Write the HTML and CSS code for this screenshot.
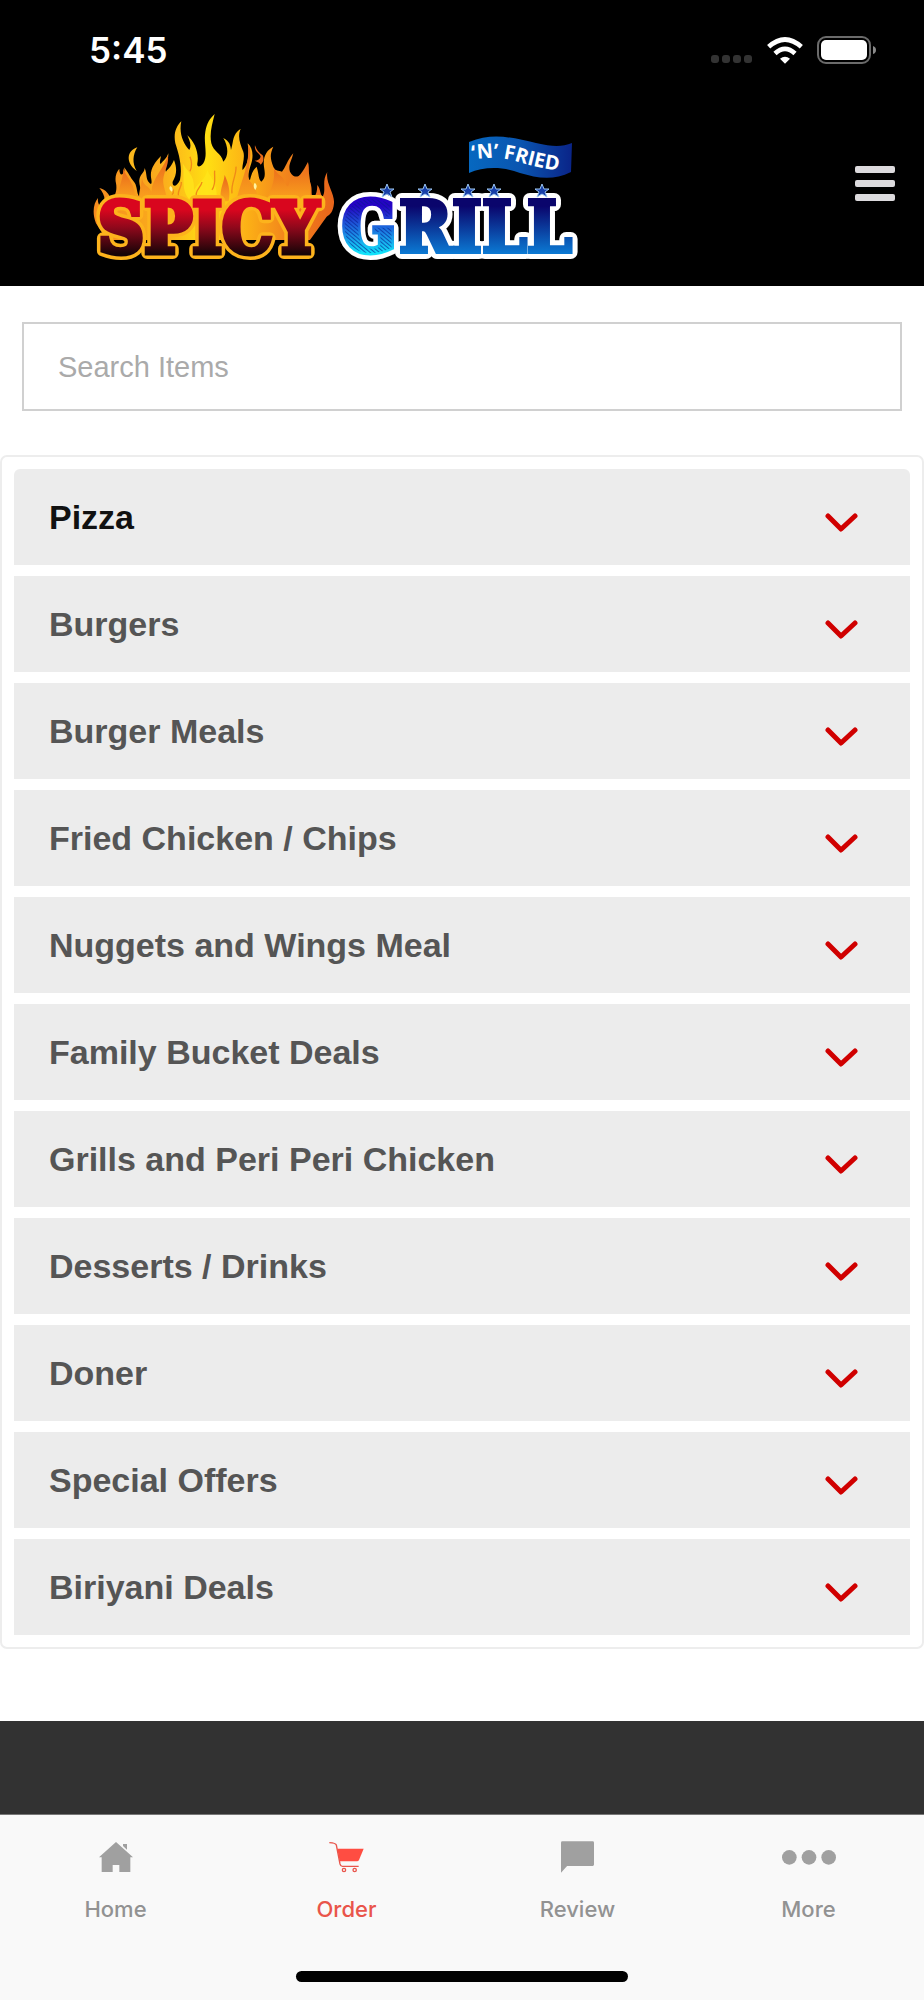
FILE: index.html
```html
<!DOCTYPE html>
<html lang="en">
<head>
    <meta charset="UTF-8">
    <meta name="viewport" content="width=device-width, initial-scale=1.0">
    <title>Spicy Grill 'N' Fried</title>
    <link rel="stylesheet" href="styles.css">
</head>
<body>

    <header class="header">
        <div class="status-bar">
            <span class="time">5:45</span>
            <div class="status-icons">
                <svg class="signal" viewBox="0 0 42 8" width="42" height="8">
                    <rect x="0" width="8" height="8" rx="3"/>
                    <rect x="11" width="8" height="8" rx="3"/>
                    <rect x="22" width="8" height="8" rx="3"/>
                    <rect x="33" width="8" height="8" rx="3"/>
                </svg>
                <svg viewBox="0 0 108 80" width="36" height="27">
                    <path d="M54 80 L39 65 Q54 52 69 65 Z" fill="#fff"/>
                    <path d="M24 49 Q54 21 84 49" fill="none" stroke="#fff" stroke-width="14"/>
                    <path d="M5 29 Q54 -15 103 29" fill="none" stroke="#fff" stroke-width="14"/>
                </svg>
                <svg viewBox="0 0 59 28" width="59" height="28">
                    <rect x="1" y="1" width="52" height="26" rx="8" fill="none" stroke="#6b6b6b" stroke-width="2"/>
                    <rect x="4" y="4" width="46" height="20" rx="5" fill="#fff"/>
                    <path d="M56 10 Q59 11 59 14 Q59 17 56 18 Z" fill="#8a8a8a"/>
                </svg>
            </div>
        </div>

        <div class="brand-bar">
            <a href="#" class="logo" aria-label="Spicy Grill 'N' Fried">
                <svg viewBox="90 110 500 168" width="500" height="168">
                    <defs>
                        <linearGradient id="fire" gradientUnits="userSpaceOnUse" x1="40" y1="0" x2="765" y2="0">
                            <stop offset="0" stop-color="#f58a1f"/>
                            <stop offset=".3" stop-color="#fbb11c"/>
                            <stop offset=".47" stop-color="#ffdf12"/>
                            <stop offset=".62" stop-color="#fdb515"/>
                            <stop offset=".8" stop-color="#f2841c"/>
                            <stop offset="1" stop-color="#e8641b"/>
                        </linearGradient>
                        <linearGradient id="ember" x1="0" y1="0" x2="0" y2="1">
                            <stop offset="0" stop-color="#e9661c"/>
                            <stop offset="1" stop-color="#fba51d"/>
                        </linearGradient>
                        <linearGradient id="red" gradientUnits="userSpaceOnUse" x1="0" y1="202" x2="0" y2="254">
                            <stop offset=".15" stop-color="#d9061e"/>
                            <stop offset=".5" stop-color="#8d081b"/>
                            <stop offset="1" stop-color="#170407"/>
                        </linearGradient>
                        <linearGradient id="blue" gradientUnits="userSpaceOnUse" x1="0" y1="201" x2="0" y2="253">
                            <stop offset=".1" stop-color="#0a056c"/>
                            <stop offset="1" stop-color="#0b78d2"/>
                        </linearGradient>
                        <linearGradient id="cyan" gradientUnits="userSpaceOnUse" x1="0" y1="201" x2="0" y2="253">
                            <stop offset=".1" stop-color="#2503c4"/>
                            <stop offset="1" stop-color="#12e3fa"/>
                        </linearGradient>
                        <linearGradient id="flag" x1="0" y1="0" x2="1" y2="0">
                            <stop offset="0" stop-color="#0668c0"/>
                            <stop offset=".5" stop-color="#0a55b0"/>
                            <stop offset="1" stop-color="#0a2488"/>
                        </linearGradient>
                        <pattern id="stripes" width="3" height="3" patternUnits="userSpaceOnUse" patternTransform="rotate(40)">
                            <rect width="3" height="1" fill="#061b8c" fill-opacity=".6"/>
                        </pattern>
                        <path id="star" d="M0 -7 L2 -2 L7 -2 L3 1 L5 6 L0 3 L-5 6 L-3 1 L-7 -2 L-2 -2 Z"/>
                        <path id="flag-line" d="M473 160 Q496 155 519 162 T574 173"/>
                    </defs>

                    <!-- flames -->
                    <g transform="translate(80 100) scale(.3333)">
                        <path fill="url(#fire)" d="M48 370 C36 340 40 310 54 294 C52 312 60 322 68 316 C80 302 72 280 58 264 C78 268 90 285 92 300 C106 290 112 270 108 250 C104 232 108 218 118 206 C118 222 124 226 128 222 C134 215 134 208 132 202 C146 218 150 232 164 248 C172 260 170 280 178 290 C190 275 176 258 178 240 C180 222 194 218 194 204 C202 222 196 236 208 248 C214 256 216 250 214 238 C208 210 222 190 243 168 C240 182 238 190 242 192 C250 182 260 176 265 160 C266 186 250 200 258 215 C262 208 270 206 282 180 C292 205 290 225 278 245 C276 262 290 262 300 240 C308 200 296 160 286 130 C280 100 288 80 304 64 C296 100 310 130 328 150 C336 135 328 120 322 106 C344 125 358 160 352 190 C350 200 358 205 370 190 C385 165 370 130 376 95 C380 70 390 55 404 42 C396 75 388 100 394 130 C400 155 424 160 430 185 C446 170 446 140 430 114 C448 124 452 135 453 150 C462 120 456 105 482 86 C472 110 480 130 490 155 C496 175 484 200 488 210 C506 190 508 165 503 130 C520 145 520 170 514 190 C506 215 500 235 510 240 C514 225 518 210 530 200 C538 225 534 235 544 245 C556 235 556 225 552 200 C548 170 560 150 580 140 C568 165 572 180 580 200 C586 215 596 210 606 215 C616 205 622 180 640 160 C634 185 624 195 630 215 C640 235 655 232 662 222 C672 210 676 200 684 186 C690 210 680 225 690 245 C700 270 690 280 700 295 C708 285 712 275 712 255 C722 265 720 285 728 290 C740 270 724 245 742 216 C736 250 765 280 762 310 C760 335 750 345 740 350 L690 420 H80 Z"/>
                        <path fill="#fbb81c" d="M172 142 C140 152 136 188 170 213 C156 190 158 164 172 142 Z"/>
                        <path fill="#e96b1c" d="M525 136 C522 156 540 160 542 170 C540 178 532 182 524 182 C534 186 540 188 542 194 C552 184 552 174 548 166 C536 158 530 150 525 136 Z"/>
                        <path fill="url(#ember)" d="M118 300 C110 265 130 245 130 205 C138 235 166 245 166 300 Z"/>
                        <path fill="url(#ember)" d="M180 304 C172 285 184 260 186 235 C190 260 206 256 214 275 C216 235 256 200 264 164 C268 200 246 220 250 250 C254 275 262 285 258 304 Z"/>
                        <path fill="url(#ember)" d="M424 304 C416 270 432 250 434 225 C446 250 452 275 446 304 Z"/>
                        <path fill="url(#ember)" d="M470 304 C474 260 512 200 504 132 C524 165 494 220 510 244 C526 262 536 280 530 304 Z"/>
                        <path fill="url(#ember)" d="M560 304 C570 270 586 250 582 205 C600 235 606 222 614 245 C630 280 622 240 640 228 C666 246 676 222 684 190 C688 240 696 260 690 304 Z"/>
                        <path fill="#ffe51a" d="M330 300 C300 270 316 230 308 190 C326 220 344 225 342 270 C352 250 376 240 382 210 C392 235 414 250 410 300 Z" opacity=".8"/>
                        <path fill="none" stroke="#f08a17" stroke-width="4" d="M296 290 C290 272 306 262 304 246 M350 290 C342 272 364 262 366 246 M396 270 C410 250 402 230 404 212 M456 280 C452 250 470 226 468 200 M330 214 C338 196 334 180 330 170 M270 268 C280 262 284 276 276 284"/>
                        <path fill="#fff3a0" d="M271 258 C278 262 280 268 276 275 C268 270 266 264 271 258 Z M524 248 C532 254 532 262 526 270 C520 262 520 256 524 248 Z"/>
                    </g>

                    <!-- wordmark: wide outline first, then the heavy letters on top -->
                    <g class="wordmark">
                        <g class="spicy-outline"><text id="spicy" x="98" y="253">SPICY</text></g>
                        <use href="#spicy" class="spicy"/>
                        <g class="grill-outline">
                            <text id="grill-g" x="342" y="252">G</text>
                            <text id="grill-rest" x="399" y="252">RILL</text>
                        </g>
                        <use href="#grill-g" class="g"/>
                        <use href="#grill-g" class="g-stripes"/>
                        <use href="#grill-rest" class="grill"/>
                    </g>

                    <g fill="#173fa8" stroke="#9cc6f2" stroke-width="1">
                        <use href="#star" x="387" y="191"/>
                        <use href="#star" x="425" y="191"/>
                        <use href="#star" x="468" y="191"/>
                        <use href="#star" x="494" y="191"/>
                        <use href="#star" x="542" y="191"/>
                    </g>

                    <path fill="url(#flag)" d="M469 142 C493 132 514 138 536 143 C553 147 562 147 572 143 L571 172 C553 181 537 178 520 173 C502 166 483 167 469 173 Z"/>
                    <text class="fried"><textPath href="#flag-line">‘N’ FRIED</textPath></text>
                </svg>
            </a>
            <button class="menu-btn" type="button" aria-label="Menu">
                <span></span>
                <span></span>
                <span></span>
            </button>
        </div>
    </header>

    <main class="content">
        <div class="search">
            <input type="search" id="search" placeholder="Search Items" aria-label="Search Items">
        </div>

        <div class="menu-list" id="menuList">
            <button class="category active" type="button">Pizza</button>
            <button class="category" type="button">Burgers</button>
            <button class="category" type="button">Burger Meals</button>
            <button class="category" type="button">Fried Chicken / Chips</button>
            <button class="category" type="button">Nuggets and Wings Meal</button>
            <button class="category" type="button">Family Bucket Deals</button>
            <button class="category" type="button">Grills and Peri Peri Chicken</button>
            <button class="category" type="button">Desserts / Drinks</button>
            <button class="category" type="button">Doner</button>
            <button class="category" type="button">Special Offers</button>
            <button class="category" type="button">Biriyani Deals</button>
        </div>
    </main>

    <footer class="footer"></footer>

    <nav class="tab-bar">
        <div class="tabs">
            <a href="#" class="tab">
                <svg viewBox="0 0 102 90" width="34" height="30">
                    <path d="M51 0 L102 46 H94 V90 H61 V69 H41 V90 H8 V46 H0 Z"/>
                    <path d="M72 6 H84 V23 L72 12 Z"/>
                </svg>
                <span>Home</span>
            </a>
            <a href="#" class="tab current">
                <svg viewBox="0 0 105 90" width="35" height="30">
                    <path d="M25 20 H104 L90 54 Q88 58 84 58 H32 Z"/>
                    <path class="line" d="M1 2 Q20 3 22 9 L33 66 Q35 73 40 73 H89"/>
                    <circle class="line" cx="45" cy="84" r="5"/>
                    <circle class="line" cx="77" cy="84" r="5"/>
                </svg>
                <span>Order</span>
            </a>
            <a href="#" class="tab">
                <svg viewBox="0 0 98 93" width="33" height="31">
                    <path d="M4 0 H94 Q98 0 98 4 V69 Q98 73 94 73 H18 L0 93 V4 Q0 0 4 0 Z"/>
                </svg>
                <span>Review</span>
            </a>
            <a href="#" class="tab">
                <svg viewBox="0 0 162 90" width="54" height="30">
                    <circle cx="22" cy="46" r="22"/>
                    <circle cx="81" cy="46" r="22"/>
                    <circle cx="140" cy="46" r="22"/>
                </svg>
                <span>More</span>
            </a>
        </div>
        <div class="home-indicator"></div>
    </nav>

    <script>
        const categories = document.querySelectorAll(".category");
        const searchInput = document.getElementById("search");

        // Add the arrow to each category
        categories.forEach(category => {
            category.insertAdjacentHTML("beforeend", `
                <svg class="arrow" viewBox="0 0 33 28" width="33" height="28">
                    <path d="M3 12 L16 25 L30 12"/>
                </svg>`);

            category.addEventListener("click", function () {
                categories.forEach(item => item.classList.remove("active"));
                this.classList.add("active");
            });
        });

        // Filter categories by name
        searchInput.addEventListener("input", function () {
            const term = this.value.trim().toLowerCase();
            categories.forEach(category => {
                category.hidden = !category.textContent.toLowerCase().includes(term);
            });
        });
    </script>

</body>
</html>
```
FILE: styles.css
```css
* {
    box-sizing: border-box;
}
body {
    display: flex;
    flex-direction: column;
    min-height: 100vh;
    margin: 0;
    font-family: "Liberation Sans", Arial, sans-serif;
    background-color: #fff;
}
.header {
    background-color: #000;
    padding-bottom: 8px;
}
.status-bar {
    display: flex;
    justify-content: space-between;
    align-items: center;
    height: 100px;
    padding: 0 48px 0 89px;
}
.time {
    font-family: Inter, sans-serif;
    font-size: 35px;
    font-weight: 600;
    color: #fff;
}
.status-icons {
    display: flex;
    align-items: center;
    gap: 14px;
}
.signal {
    fill: #333;
    margin-top: 18px;
}
.brand-bar {
    display: flex;
    justify-content: space-between;
    align-items: flex-start;
    padding: 10px 29px 0 90px;
}
.logo svg {
    display: block;
}
.wordmark {
    font-family: "DejaVu Serif Condensed", "DejaVu Serif", serif;
    font-size: 71px;
    font-weight: bold;
    stroke-linejoin: miter;
}
.spicy-outline {
    fill: #fdb31c;
    stroke: #fdb31c;
    stroke-width: 12px;
    stroke-linejoin: round;
}
.spicy {
    fill: url(#red);
    stroke: url(#red);
    stroke-width: 5px;
}
.grill-outline {
    fill: #fff;
    stroke: #fff;
    stroke-width: 14px;
    stroke-linejoin: round;
}
.grill {
    fill: url(#blue);
    stroke: url(#blue);
    stroke-width: 4px;
}
.wordmark .g {
    fill: url(#cyan);
    stroke: url(#cyan);
    stroke-width: 5px;
}
.g-stripes {
    fill: url(#stripes);
}
.fried {
    font-family: "Open Sans", sans-serif;
    font-size: 20px;
    font-weight: bold;
    fill: #fff;
}
.menu-btn {
    display: flex;
    flex-direction: column;
    gap: 7px;
    margin-top: 56px;
    padding: 0;
    background: none;
    border: none;
    cursor: pointer;
}
.menu-btn span {
    width: 40px;
    height: 7px;
    background-color: #dcdadd;
    border-radius: 2px;
}
.search {
    padding: 36px 22px 44px;
}
.search input {
    display: block;
    width: 100%;
    height: 89px;
    padding: 2px 34px 0;
    font-family: inherit;
    font-size: 29px;
    color: #333;
    background: #fff;
    border: 2px solid #d0d0d0;
    border-radius: 0;
    appearance: none;
}
.search input::placeholder {
    color: #aaa;
}
.menu-list {
    display: flex;
    flex-direction: column;
    gap: 11px;
    padding: 12px;
    border: 2px solid #ededed;
    border-radius: 7px;
    margin-bottom: 72px;
}
.category {
    display: flex;
    justify-content: space-between;
    align-items: center;
    height: 96px;
    padding: 1px 52px 0 35px;
    font-family: inherit;
    font-size: 34px;
    font-weight: bold;
    text-align: left;
    color: #555;
    background-color: #ececec;
    border: none;
    cursor: pointer;
}
.category:first-child {
    border-radius: 6px 6px 0 0;
}
.category[hidden] {
    display: none;
}
.category.active {
    color: #111;
}
.arrow {
    fill: none;
    stroke: #d00000;
    stroke-width: 5px;
    stroke-linecap: round;
    stroke-linejoin: round;
}
.footer {
    flex: 1;
    min-height: 93px;
    background-color: #323232;
}
.tab-bar {
    padding: 26px 0 18px;
    background-color: #f9f9f9;
    border-top: 1px solid #777;
}
.tabs {
    display: grid;
    grid-template-columns: repeat(4, 1fr);
}
.tab {
    display: flex;
    flex-direction: column;
    align-items: center;
    gap: 22px;
    font-family: Inter, sans-serif;
    font-size: 22px;
    font-weight: 500;
    line-height: 28px;
    color: #929292;
    text-decoration: none;
}
.tab svg {
    height: 32px;
    fill: #a0a0a0;
}
.tab.current {
    color: #e9554b;
}
.tab.current svg {
    fill: #ff4d42;
}
.tab .line {
    fill: none;
    stroke: #e9554b;
    stroke-width: 4px;
}
.home-indicator {
    width: 36%;
    height: 11px;
    margin: 48px auto 0;
    background-color: #000;
    border-radius: 6px;
}
```
